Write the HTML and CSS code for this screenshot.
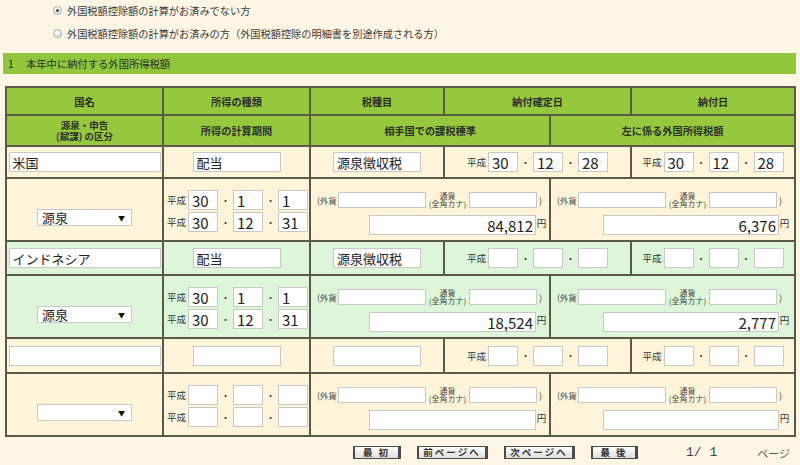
FILE: index.html
```html
<!DOCTYPE html>
<html lang="ja">
<head>
<meta charset="utf-8">
<title>外国所得税額</title>
<link rel="stylesheet" href="styles.css">
</head>
<body>
<div class="page">
  <div class="radios">
    <div class="radio-row"><span class="radio checked"></span><span>外国税額控除額の計算がお済みでない方</span></div>
    <div class="radio-row"><span class="radio"></span><span>外国税額控除額の計算がお済みの方（外国税額控除の明細書を別途作成される方）</span></div>
  </div>

  <div class="section-bar"><span class="num">1</span><span>本年中に納付する外国所得税額</span></div>

  <div class="grid">
    <!-- header row 1 -->
    <div class="c hd">国名</div>
    <div class="c hd">所得の種類</div>
    <div class="c hd">税種目</div>
    <div class="c hd s2">納付確定日</div>
    <div class="c hd">納付日</div>
    <!-- header row 2 -->
    <div class="c hd hd-sm"><span class="hl">源泉・申告</span><span class="hl">(賦課) の区分</span></div>
    <div class="c hd">所得の計算期間</div>
    <div class="c hd s2">相手国での課税標準</div>
    <div class="c hd s2">左に係る外国所得税額</div>

    <!-- row A -->
    <div class="c cr"><input class="fld name" value="米国"></div>
    <div class="c cr"><input class="fld kind" value="配当"></div>
    <div class="c cr"><input class="fld kind" value="源泉徴収税"></div>
    <div class="c cr s2"><div class="date"><span class="era">平成</span><input class="fld d" value="30"><span class="dot">・</span><input class="fld d" value="12"><span class="dot">・</span><input class="fld d" value="28"></div></div>
    <div class="c cr"><div class="date"><span class="era">平成</span><input class="fld d" value="30"><span class="dot">・</span><input class="fld d" value="12"><span class="dot">・</span><input class="fld d" value="28"></div></div>
    <!-- row B -->
    <div class="c cr sel-cell"><div class="select"><span>源泉</span><span class="arrow">▼</span></div></div>
    <div class="c cr period">
      <div class="date"><span class="era">平成</span><input class="fld d" value="30"><span class="dot">・</span><input class="fld d" value="1"><span class="dot">・</span><input class="fld d" value="1"></div>
      <div class="date"><span class="era">平成</span><input class="fld d" value="30"><span class="dot">・</span><input class="fld d" value="12"><span class="dot">・</span><input class="fld d" value="31"></div>
    </div>
    <div class="c cr s2 amt">
      <div class="cur-line"><span class="lbl">(外貨</span><input class="fld cur"><span class="lbl2"><span class="l2a">通貨</span><span class="l2b">(全角カナ)</span></span><input class="fld cur2"><span class="paren">)</span></div>
      <div class="yen-line"><input class="fld money amt-a" value="84,812"><span class="yen">円</span></div>
    </div>
    <div class="c cr s2 amt amt-right">
      <div class="cur-line"><span class="lbl">(外貨</span><input class="fld cur"><span class="lbl2"><span class="l2a">通貨</span><span class="l2b">(全角カナ)</span></span><input class="fld cur2"><span class="paren">)</span></div>
      <div class="yen-line"><input class="fld money amt-b" value="6,376"><span class="yen">円</span></div>
    </div>

    <!-- row C -->
    <div class="c gr"><input class="fld name" value="インドネシア"></div>
    <div class="c gr"><input class="fld kind" value="配当"></div>
    <div class="c gr"><input class="fld kind" value="源泉徴収税"></div>
    <div class="c gr s2"><div class="date"><span class="era">平成</span><input class="fld d"><span class="dot">・</span><input class="fld d"><span class="dot">・</span><input class="fld d"></div></div>
    <div class="c gr"><div class="date"><span class="era">平成</span><input class="fld d"><span class="dot">・</span><input class="fld d"><span class="dot">・</span><input class="fld d"></div></div>
    <!-- row D -->
    <div class="c gr sel-cell"><div class="select"><span>源泉</span><span class="arrow">▼</span></div></div>
    <div class="c gr period">
      <div class="date"><span class="era">平成</span><input class="fld d" value="30"><span class="dot">・</span><input class="fld d" value="1"><span class="dot">・</span><input class="fld d" value="1"></div>
      <div class="date"><span class="era">平成</span><input class="fld d" value="30"><span class="dot">・</span><input class="fld d" value="12"><span class="dot">・</span><input class="fld d" value="31"></div>
    </div>
    <div class="c gr s2 amt">
      <div class="cur-line"><span class="lbl">(外貨</span><input class="fld cur"><span class="lbl2"><span class="l2a">通貨</span><span class="l2b">(全角カナ)</span></span><input class="fld cur2"><span class="paren">)</span></div>
      <div class="yen-line"><input class="fld money amt-a" value="18,524"><span class="yen">円</span></div>
    </div>
    <div class="c gr s2 amt amt-right">
      <div class="cur-line"><span class="lbl">(外貨</span><input class="fld cur"><span class="lbl2"><span class="l2a">通貨</span><span class="l2b">(全角カナ)</span></span><input class="fld cur2"><span class="paren">)</span></div>
      <div class="yen-line"><input class="fld money amt-b" value="2,777"><span class="yen">円</span></div>
    </div>

    <!-- row E -->
    <div class="c cr"><input class="fld name"></div>
    <div class="c cr"><input class="fld kind"></div>
    <div class="c cr"><input class="fld kind"></div>
    <div class="c cr s2"><div class="date"><span class="era">平成</span><input class="fld d"><span class="dot">・</span><input class="fld d"><span class="dot">・</span><input class="fld d"></div></div>
    <div class="c cr"><div class="date"><span class="era">平成</span><input class="fld d"><span class="dot">・</span><input class="fld d"><span class="dot">・</span><input class="fld d"></div></div>
    <!-- row F -->
    <div class="c cr sel-cell"><div class="select"><span></span><span class="arrow">▼</span></div></div>
    <div class="c cr period">
      <div class="date"><span class="era">平成</span><input class="fld d"><span class="dot">・</span><input class="fld d"><span class="dot">・</span><input class="fld d"></div>
      <div class="date"><span class="era">平成</span><input class="fld d"><span class="dot">・</span><input class="fld d"><span class="dot">・</span><input class="fld d"></div>
    </div>
    <div class="c cr s2 amt">
      <div class="cur-line"><span class="lbl">(外貨</span><input class="fld cur"><span class="lbl2"><span class="l2a">通貨</span><span class="l2b">(全角カナ)</span></span><input class="fld cur2"><span class="paren">)</span></div>
      <div class="yen-line"><input class="fld money amt-a"><span class="yen">円</span></div>
    </div>
    <div class="c cr s2 amt amt-right">
      <div class="cur-line"><span class="lbl">(外貨</span><input class="fld cur"><span class="lbl2"><span class="l2a">通貨</span><span class="l2b">(全角カナ)</span></span><input class="fld cur2"><span class="paren">)</span></div>
      <div class="yen-line"><input class="fld money amt-b"><span class="yen">円</span></div>
    </div>
  </div>

  <div class="pager">
    <div class="btns">
      <span class="btn w-first">最 初</span>
      <span class="btn w-page">前ページへ</span>
      <span class="btn w-page">次ページへ</span>
      <span class="btn w-last">最 後</span>
    </div>
    <span class="pnum">1/ 1</span>
    <span class="plabel">ページ</span>
  </div>
</div>
</body>
</html>
```

FILE: styles.css
```css
html, body {
  margin: 0;
  padding: 0;
}
body {
  background: #fdf6e4;
  font-family: "Noto Sans CJK JP", "Noto Sans", sans-serif;
  color: #333;
}
.page {
  width: 800px;
  height: 465px;
  overflow: hidden;
}

/* radios */
.radios {
  padding-left: 53px;
  display: flex;
  flex-direction: column;
  gap: 3px;
}
.radio-row {
  height: 20px;
  display: flex;
  align-items: center;
  gap: 5px;
  font-size: 10.2px;
  color: #3a3a3a;
}
.radio {
  width: 9px;
  height: 9px;
  box-sizing: border-box;
  border-radius: 50%;
  border: 1px solid #a9a9a9;
  background: radial-gradient(circle at 40% 35%, #ffffff, #d8d8d8);
  display: flex;
  align-items: center;
  justify-content: center;
}
.radio.checked::after {
  content: "";
  width: 3px;
  height: 3px;
  border-radius: 50%;
  background: #444;
}

/* section bar */
.section-bar {
  margin: 10px 4px 0 3px;
  height: 21px;
  background: #8fc63c;
  display: flex;
  align-items: center;
  padding-left: 5px;
  font-size: 10.3px;
  color: #2e2e2e;
}
.section-bar .num {
  width: 18px;
}

/* grid table */
.grid {
  margin: 12px 0 0 5px;
  display: grid;
  grid-template-columns: 155px 145px 132px 104px 79px 162px;
  grid-template-rows: 26px 29px 30px 61px 32px 61px 33px 61px;
  gap: 2px;
  padding: 2px;
  background: #5b5a48;
  width: max-content;
}
.c {
  display: flex;
  align-items: center;
  justify-content: center;
  min-width: 0;
}
.s2 {
  grid-column: span 2;
}
.hd {
  background: #95c83c;
  font-weight: bold;
  font-size: 10.2px;
  line-height: 11px;
  text-align: center;
  color: #2e2e2e;
}
.hd-sm {
  flex-direction: column;
  font-size: 9.5px;
}
.hl {
  display: block;
  height: 11px;
  line-height: 11px;
}
.cr {
  background: #fef4da;
}
.gr {
  background: #ddf6d9;
}

/* fields */
.fld {
  box-sizing: border-box;
  height: 20px;
  margin: 0;
  padding: 0 3px;
  border: 1px solid #c8c8c8;
  background: #fff;
  font-family: "Noto Sans CJK JP", "Noto Sans", sans-serif;
  font-size: 13px;
  color: #222;
  outline: none;
}
.name {
  width: 152px;
}
.kind {
  width: 88px;
}
.d {
  width: 30px;
  font-size: 15px;
}

.date {
  display: flex;
  align-items: center;
}
.era {
  width: 19px;
  margin-right: 2px;
  font-size: 9.5px;
  line-height: 10px;
  color: #333;
}
.dot {
  width: 15px;
  text-align: center;
  font-size: 9px;
  color: #333;
}

.period {
  flex-direction: column;
  align-items: flex-start;
  justify-content: flex-start;
  padding: 11px 0 0 3px;
  gap: 2px;
}

/* select */
.sel-cell {
  align-items: flex-start;
  padding-top: 30px;
}
.select {
  box-sizing: border-box;
  width: 95px;
  height: 17px;
  border: 1px solid #c8c8c8;
  background: #fff;
  display: flex;
  align-items: center;
  justify-content: space-between;
  padding: 0 6px 0 4px;
  font-size: 13px;
  color: #222;
}
.select .arrow {
  font-size: 7px;
  color: #111;
}

/* amounts */
.amt {
  flex-direction: column;
  align-items: stretch;
  justify-content: flex-start;
  padding: 13px 2px 0 6px;
  gap: 7px;
}
.amt-right {
  padding-right: 4px;
}
.cur-line {
  display: flex;
  align-items: center;
  height: 16px;
}
.lbl {
  width: 21px;
  font-size: 8.5px;
  color: #444;
}
.lbl2 {
  width: 43px;
  display: flex;
  flex-direction: column;
  align-items: center;
  font-size: 8px;
  color: #444;
}
.l2a, .l2b {
  display: block;
  height: 8px;
  line-height: 8px;
}
.cur {
  width: 88px;
  height: 16px;
}
.cur2 {
  width: 68px;
  height: 16px;
}
.paren {
  font-size: 9px;
  margin-left: 2px;
  color: #444;
}
.yen-line {
  display: flex;
  align-items: center;
  justify-content: flex-end;
}
.money {
  font-size: 15px;
  text-align: right;
  padding-right: 2px;
}
.amt-a {
  width: 167px;
}
.amt-b {
  width: 176px;
}
.yen {
  width: 11px;
  text-align: center;
  font-size: 9.5px;
  margin-top: -4px;
  color: #333;
}

/* pager */
.pager {
  margin-top: 9px;
  height: 13px;
  display: flex;
  align-items: center;
  justify-content: flex-end;
  padding-right: 10px;
}
.btns {
  display: flex;
  gap: 16px;
}
.btn {
  box-sizing: border-box;
  height: 13px;
  border: 1px solid #4a4a4a;
  border-left-width: 2px;
  border-right-width: 3px;
  background: linear-gradient(#ffffff, #dcdcdc);
  display: flex;
  align-items: center;
  justify-content: center;
  font-size: 9.5px;
  font-weight: bold;
  letter-spacing: 2px;
  color: #333;
  line-height: 1;
}
.w-first { width: 48px; }
.w-page { width: 71px; }
.w-last { width: 47px; }
.pnum {
  margin-left: 48px;
  font-family: "Liberation Mono", monospace;
  font-size: 13px;
  color: #444;
}
.plabel {
  margin-left: 40px;
  font-size: 11px;
  color: #555;
}
```
